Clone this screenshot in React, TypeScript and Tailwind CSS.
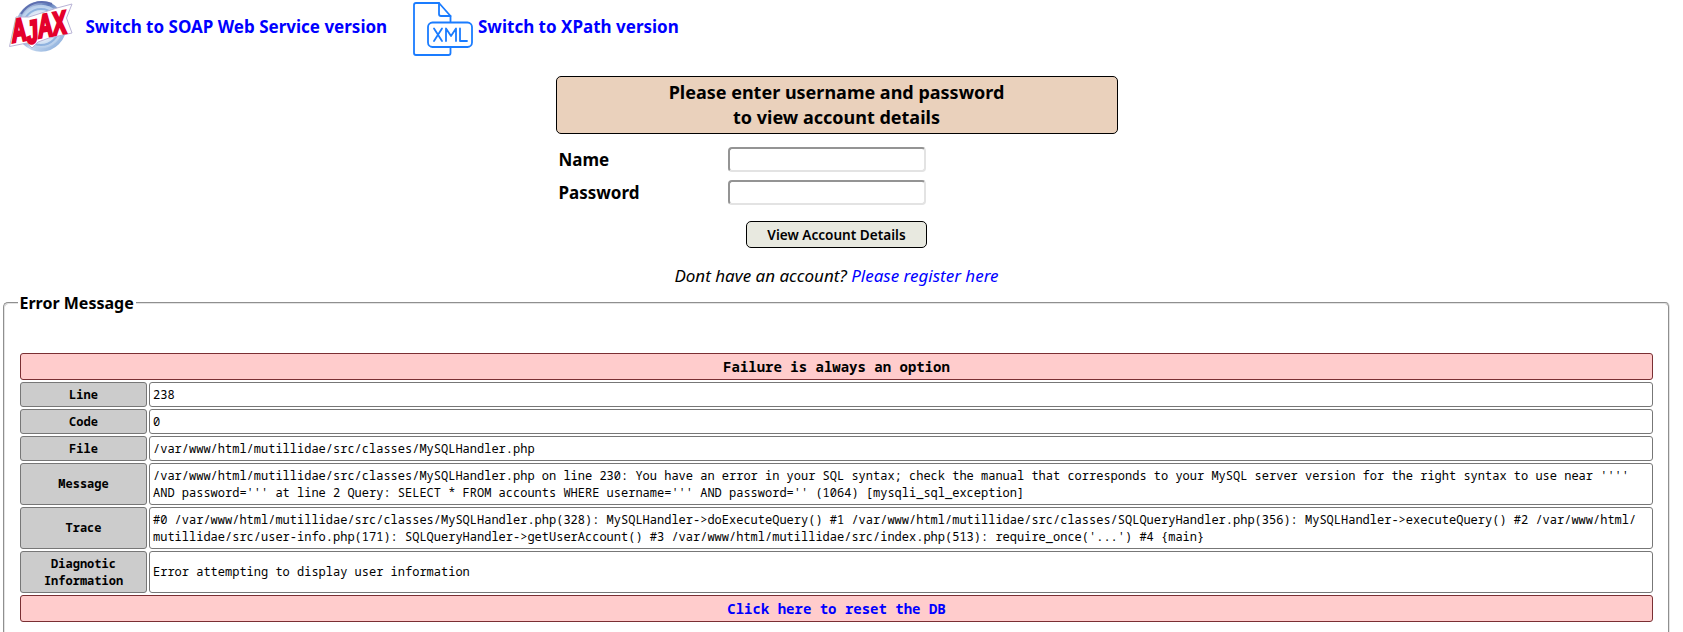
import React from "react";

const mono = "font-['Noto_Sans_Mono','DejaVu_Sans_Mono',monospace]";

const rows: { label: React.ReactNode; lines: string[] }[] = [
  { label: "Line", lines: ["238"] },
  { label: "Code", lines: ["0"] },
  { label: "File", lines: ["/var/www/html/mutillidae/src/classes/MySQLHandler.php"] },
  {
    label: "Message",
    lines: [
      "/var/www/html/mutillidae/src/classes/MySQLHandler.php on line 230: You have an error in your SQL syntax; check the manual that corresponds to your MySQL server version for the right syntax to use near ''''",
      "AND password=''' at line 2 Query: SELECT * FROM accounts WHERE username=''' AND password='' (1064) [mysqli_sql_exception]",
    ],
  },
  {
    label: "Trace",
    lines: [
      "#0 /var/www/html/mutillidae/src/classes/MySQLHandler.php(328): MySQLHandler->doExecuteQuery() #1 /var/www/html/mutillidae/src/classes/SQLQueryHandler.php(356): MySQLHandler->executeQuery() #2 /var/www/html/",
      "mutillidae/src/user-info.php(171): SQLQueryHandler->getUserAccount() #3 /var/www/html/mutillidae/src/index.php(513): require_once('...') #4 {main}",
    ],
  },
  {
    label: (
      <>
        Diagnotic
        <br />
        Information
      </>
    ),
    lines: ["Error attempting to display user information"],
  },
];

function AjaxLogo() {
  return (
    <svg width="64" height="56" viewBox="0 0 64 56" className="block overflow-visible">
      <defs>
        <linearGradient id="ring" x1="0" y1="0" x2="1" y2="1">
          <stop offset="0" stopColor="#dfe9f6" />
          <stop offset="0.35" stopColor="#5b78b8" />
          <stop offset="0.6" stopColor="#c8daf0" />
          <stop offset="1" stopColor="#7fa6d8" />
        </linearGradient>
        <radialGradient id="disc">
          <stop offset="0" stopColor="#ffffff" />
          <stop offset="0.6" stopColor="#dfeaf7" />
          <stop offset="1" stopColor="#a9c4e6" />
        </radialGradient>
      </defs>
      <circle cx="32" cy="26.500" r="23.500" fill="url(#disc)" stroke="url(#ring)" strokeWidth="3.500" />
      <path d="M12 14C18 4 30 -1 43 4" fill="none" stroke="#5d6fb0" strokeWidth="2" />
      <circle cx="32" cy="27" r="18" fill="none" stroke="#8fb2de" strokeWidth="2" />
      <path d="M7 17L20 17L48 8L63 4L57.500 18L63 33L40 38L29 42L23 48L18 43L0.500 46.500Z" fill="#fff" stroke="#b9b4d6" strokeWidth="1" />
      <g transform="translate(3 42.500) rotate(-10) skewX(-8) scale(0.65 1)">
        <text
          fill="#e4002b"
          stroke="#e4002b"
          strokeWidth="2.600"
          className="font-['Liberation_Sans',sans-serif] text-[32px] font-bold"
        >
          A<tspan dy="4">J</tspan><tspan dy="-4">AX</tspan>
        </text>
      </g>
    </svg>
  );
}

function XmlIcon() {
  return (
    <svg width="60" height="56" viewBox="0 0 60 56" fill="none" stroke="#1a7cff" strokeWidth="1.800" strokeLinecap="round" strokeLinejoin="round" className="block">
      <path d="M37.500 21.500V16L26 3H3Q1 3 1 5V53Q1 55 3 55H35.500Q37.500 55 37.500 53V47" />
      <path d="M26 3V14Q26 16 28 16H37.500" />
      <rect x="15" y="22.500" width="44" height="24.500" rx="4.500" />
      <path d="M21 28.500L29 41M29 28.500L21 41M33 41V28.500L38 36L43 28.500V41M47 28.500V41H54" />
    </svg>
  );
}

function Field({ label, type }: { label: string; type: string }) {
  return (
    <label className="flex h-[33px] items-center">
      <span className="w-[169.500px] text-[17px] leading-[23px] font-bold">{label}</span>
      <input
        type={type}
        className="h-[25px] w-[198px] rounded-[4px] border-2 border-t-[#949494] border-r-[#e3e3e3] border-b-[#e3e3e3] border-l-[#949494] bg-white px-1 outline-none"
      />
    </label>
  );
}

export default function App() {
  return (
    <div className="h-[632px] w-full overflow-hidden bg-white font-['Noto_Sans',sans-serif] text-[16px] leading-[22px] text-black">
      <header className="flex h-[56px] items-start pl-[9px] text-[17px] leading-[23px]">
        <AjaxLogo />
        <a href="#" className="mt-[15px] ml-[12.500px] w-[327.500px] font-bold whitespace-nowrap text-[#0000ff]">
          Switch to SOAP Web Service version
        </a>
        <XmlIcon />
        <a href="#" className="mt-[15px] ml-[5px] font-bold whitespace-nowrap text-[#0000ff]">
          Switch to XPath version
        </a>
      </header>

      <form className="mt-[20px] ml-[556px] w-[562px]">
        <div className="rounded-[5px] border border-black bg-[#ead1bc] py-[3px] pr-[4px] pl-[3px] text-center text-[18px] leading-[25px] font-bold">
          Please enter username and password
          <br />
          to view account details
        </div>
        <div className="mt-[9px] pl-[2.500px]">
          <Field label="Name" type="text" />
          <Field label="Password" type="password" />
        </div>
        <button
          type="button"
          className="mt-[12px] ml-[190px] block h-[27px] w-[181px] rounded-[5px] border border-black bg-[#e8e9e0] text-center text-[13.600px] leading-[18px] font-semibold"
        >
          View Account Details
        </button>
        <p className="mt-[16px] pr-px text-center text-[17px] leading-[23px] italic">
          Dont have an account?{" "}
          <a href="#" className="text-[#0000ff]">
            Please register here
          </a>
        </p>
      </form>

      <fieldset className="mt-[5px] ml-[3px] h-[420px] w-[1667px] rounded-[5px] border-2 border-[#e3e3e3] pr-[15px] pl-[15px] [border-style:groove]">
        <legend className="-ml-[2px] pr-[2.500px] pl-[1.500px] font-bold">Error Message</legend>
        <div className={`mt-[39px] flex flex-col gap-[2px] text-[12px] leading-[17px] ${mono}`}>
          <div className="rounded-[3px] border border-[#7a2f33] bg-[#ffcccc] p-[3px] text-center text-[14px] leading-[19px] font-bold">
            Failure is always an option
          </div>
          {rows.map((row, i) => (
            <div key={i} className="flex gap-[2px]">
              <div className="flex w-[127px] items-center justify-center rounded-[3px] border border-[#777777] bg-[#cccccc] p-[3px] text-center font-bold">
                <span className={row.lines.length > 1 ? "mb-px" : ""}>{row.label}</span>
              </div>
              <div className="flex flex-1 flex-col justify-center rounded-[3px] border border-[#777777] p-[3px]">
                {row.lines.map((line) => (
                  <span key={line} className={i === rows.length - 1 ? "mb-px whitespace-nowrap" : "whitespace-nowrap"}>
                    {line}
                  </span>
                ))}
              </div>
            </div>
          ))}
          <div className="rounded-[3px] border border-[#7a2f33] bg-[#ffcccc] p-[3px] text-center text-[14px] leading-[19px] font-bold">
            <a href="#" className="text-[#0000ff]">
              Click here to reset the DB
            </a>
          </div>
        </div>
      </fieldset>
    </div>
  );
}
